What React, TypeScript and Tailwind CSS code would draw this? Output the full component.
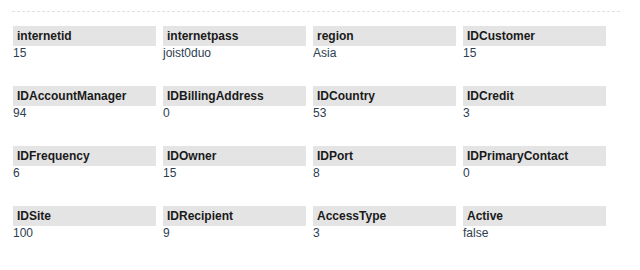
const fields: [string, string][] = [
  ["internetid", "15"],
  ["internetpass", "joist0duo"],
  ["region", "Asia"],
  ["IDCustomer", "15"],
  ["IDAccountManager", "94"],
  ["IDBillingAddress", "0"],
  ["IDCountry", "53"],
  ["IDCredit", "3"],
  ["IDFrequency", "6"],
  ["IDOwner", "15"],
  ["IDPort", "8"],
  ["IDPrimaryContact", "0"],
  ["IDSite", "100"],
  ["IDRecipient", "9"],
  ["AccessType", "3"],
  ["Active", "false"],
];

export default function App() {
  return (
    <div className="w-[640px] h-[270px] bg-white font-['Liberation_Sans',Arial,sans-serif] text-[12px]">
      <div className="pt-[11px] pl-[12px]">
        <div className="w-[608px] border-t border-dashed border-[#e0e0e0]" />
        <div className="grid grid-cols-[repeat(4,143px)] gap-x-[7px] gap-y-[25px] pl-[1px] pt-[14px]">
          {fields.map(([label, value]) => (
            <div key={label}>
              <div className="h-[20px] bg-[#e4e4e4] pl-[4px] font-bold text-[#1a1a1a] leading-[20px]">
                {label}
              </div>
              <div className="h-[15px] leading-[15px] text-[#2e3d4f]">{value}</div>
            </div>
          ))}
        </div>
      </div>
    </div>
  );
}
